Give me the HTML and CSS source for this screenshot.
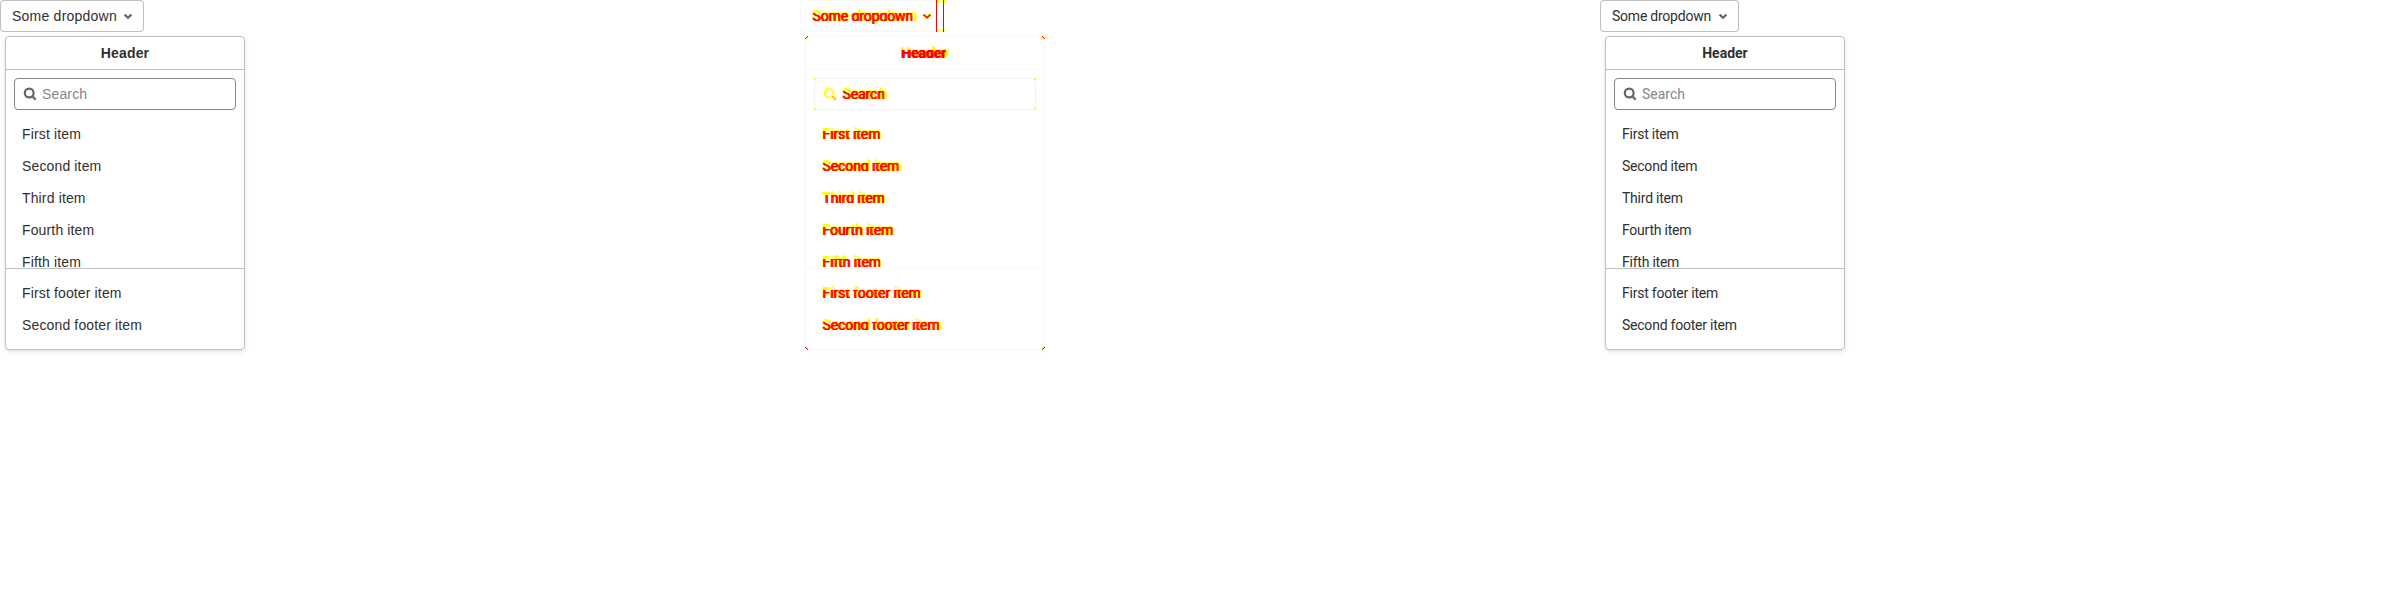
FILE: index.html
```
<!DOCTYPE html>
<html lang="en">
<head>
<meta charset="utf-8">
<title>Dropdown comparison</title>
<link rel="stylesheet" href="styles.css">
</head>
<body>
<main class="comparison" id="comparison"></main>
<template id="dropdown">
  <button class="toggle"><span class="label" data-text="Some dropdown">Some dropdown</span><svg class="chevron" viewBox="0 0 16 16"><path d="M4.6 6.6 8 9.8l3.4-3.2"/></svg></button>
  <div class="menu">
    <i class="corner tl"></i><i class="corner tr"></i><i class="corner bl"></i><i class="corner br"></i>
    <header class="menu-header"><span class="label bold" data-text="Header">Header</span></header>
    <div class="search"><i class="dot tl"></i><i class="dot tr"></i><i class="dot bl"></i><i class="dot br"></i><svg class="search-icon" viewBox="0 0 16 16"><circle cx="7.2" cy="7" r="4.4"/><path d="m10.4 10.3 3.3 3.3"/></svg><span class="label" data-text="Search">Search</span></div>
    <ul class="items">
      <li><span class="label" data-text="First item">First item</span></li>
      <li><span class="label" data-text="Second item">Second item</span></li>
      <li><span class="label" data-text="Third item">Third item</span></li>
      <li><span class="label" data-text="Fourth item">Fourth item</span></li>
      <li><span class="label" data-text="Fifth item">Fifth item</span></li>
    </ul>
    <ul class="footer">
      <li><span class="label" data-text="First footer item">First footer item</span></li>
      <li><span class="label" data-text="Second footer item">Second footer item</span></li>
    </ul>
  </div>
</template>
<script src="script.js"></script>
</body>
</html>
```
FILE: script.js
```
const template = document.getElementById("dropdown");
for (const name of ["before", "diff", "after"]) {
  const panel = document.createElement("section");
  panel.className = `panel ${name}`;
  panel.append(template.content.cloneNode(true));
  document.getElementById("comparison").append(panel);
}
```
FILE: styles.css
```
* { box-sizing: border-box; }
body { margin: 0; background: #fff; }
.comparison { display: grid; grid-template-columns: repeat(3, 800px); height: 600px; overflow: hidden; }
.panel { --line: #bfbfbf; --field: #868686; font: 14px/16px "Liberation Sans", Arial, sans-serif; letter-spacing: .14px; color: #303030; }
.after { font-family: Roboto, sans-serif; letter-spacing: -.23px; }
.after .bold, .after .search { letter-spacing: 0; }
.toggle { position: relative; display: flex; align-items: center; justify-content: space-between; width: 144px; height: 32px; padding: 0 8px 0 12px; margin: 0; border: 0; border-radius: 4px; background: #fff; box-shadow: inset 0 0 0 1px var(--line); font: inherit; letter-spacing: inherit; color: inherit; white-space: nowrap; }
.before .toggle, .diff .toggle { letter-spacing: .23px; }
.after .toggle { width: 139px; }
.chevron, .search-icon { width: 16px; height: 16px; fill: none; stroke: #666; stroke-width: 2.2; flex: none; }
.menu { position: relative; width: 240px; height: 314px; margin: 4px 0 0 5px; border: 1px solid var(--line); border-radius: 4px; box-shadow: 0 2px 4px rgba(0,0,0,.1); background: #fff; }
.menu-header { height: 33px; border-bottom: 1px solid var(--line); display: flex; align-items: center; justify-content: center; }
.bold { font-weight: 700; }
.search { position: relative; margin: 8px 8px 0; height: 32px; border: 1px solid var(--field); border-radius: 4px; display: flex; align-items: center; gap: 4px; padding-left: 7px; }
.search .label { color: #868686; }
ul { list-style: none; margin: 0; padding: 8px 16px; }
li { height: 32px; display: flex; align-items: center; white-space: nowrap; }
.items { height: 158px; overflow: hidden; }
.footer { border-top: 1px solid var(--line); }
.corner, .dot { display: none; }

/* Difference panel: faint frames with changed pixels in red and yellow */
.diff { --line: #f8f8f8; --field: #f1f1f1; }
.diff .menu { box-shadow: 0 2px 4px rgba(0,0,0,.01); }
.diff .label { position: relative; color: #ff0; text-shadow: 1px 0 #ff0, 0 -1px #ff0; }
.diff .label::after { content: attr(data-text); position: absolute; left: 0; top: 0; font-family: Roboto, sans-serif; letter-spacing: -.1px; color: #f00; text-shadow: 1px 0 #f00; clip-path: inset(5px 0 0 0); white-space: nowrap; }
.diff .toggle::after { content: ""; position: absolute; right: 0; top: 0; width: 6px; height: 32px; border: solid #f00; border-width: 0 1px; }
.diff .toggle::before { content: ""; position: absolute; right: -1px; top: 0; width: 8px; height: 32px; background: linear-gradient(#ff0, #ff0) 0 0/3px 3px no-repeat, linear-gradient(#ff0, #ff0) 100% 0/3px 3px no-repeat, linear-gradient(#ff0, #ff0) 0 100%/3px 3px no-repeat, linear-gradient(#ff0, #ff0) 100% 100%/3px 3px no-repeat; }
.diff .chevron { position: relative; left: -1px; stroke: #f00; stroke-width: 1.5; filter: drop-shadow(-1px 0 #ff0) drop-shadow(1px 0 #ff0); }
.diff .search-icon { stroke: #ff0; stroke-width: 2.5; stroke-dasharray: 2 .7; }
.diff .search-icon path { stroke: #fb0; }
.diff .corner, .diff .dot { display: block; position: absolute; width: 3px; height: 3px; }
.corner { background: linear-gradient(135deg, #fff 35%, #f00 36% 65%, #ff0 66%); }
.dot { background: #ff0; }
.diff .dot { width: 2px; height: 2px; }
.tl { left: -1px; top: -1px; }
.tr { right: -1px; top: -1px; transform: rotate(90deg); }
.bl { left: -1px; bottom: -1px; transform: rotate(-90deg); }
.br { right: -1px; bottom: -1px; transform: rotate(180deg); }
```
